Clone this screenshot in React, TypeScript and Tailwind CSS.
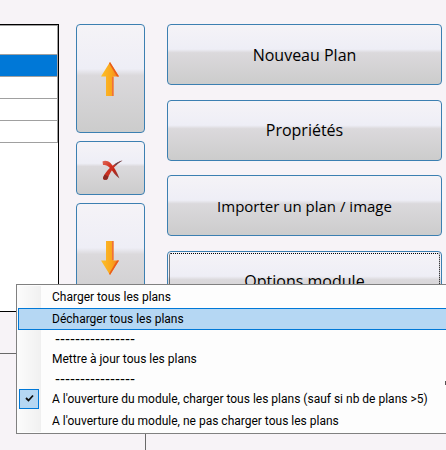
import { useState } from "react";
import clsx from "clsx";

const BUTTON =
  "flex items-center justify-center rounded border border-[#3c7fb1] bg-[linear-gradient(to_bottom,#f5f3f7_0%,#eeeef6_41%,#dbd9dc_47%,#cccccc_100%)] text-black";

const ROWS = ["plan-1", "plan-2", "plan-3", "plan-4"];

const ITEMS = [
  { kind: "action", label: "Charger tous les plans" },
  { kind: "action", label: "Décharger tous les plans", active: true },
  { kind: "divider", label: "----------------" },
  { kind: "action", label: "Mettre à jour tous les plans" },
  { kind: "divider", label: "----------------" },
  {
    kind: "check",
    label: "A l'ouverture du module, charger tous les plans (sauf si nb de plans >5)",
  },
  {
    kind: "action",
    label: "A l'ouverture du module, ne pas charger tous les plans",
  },
];

function Arrow({ down = false }: { down?: boolean }) {
  return (
    <svg
      width="18"
      height="34"
      viewBox="0 0 18 34"
      className={clsx(down && "-scale-y-100")}
      aria-hidden="true"
    >
      <defs>
        <linearGradient id="arrow-fill" x1="0" x2="1" y1="0" y2="0">
          <stop offset="0" stopColor="#fcc02a" />
          <stop offset="0.6" stopColor="#faa51c" />
          <stop offset="1" stopColor="#f27a24" />
        </linearGradient>
      </defs>
      <path d="M9 0 18 14.500H12.500V34H5V14.500H0Z" fill="url(#arrow-fill)" />
      <path d="M9 0 18 14.500H16L8.200 1.500Z" fill="#ea5a1c" />
      <path d="M11 15H12.500V34H11Z" fill="#f0703a" />
    </svg>
  );
}

function Cross() {
  return (
    <svg width="21" height="20" viewBox="0 0 21 20" aria-hidden="true">
      <defs>
        <linearGradient id="cross-fill" x1="0" x2="1" y1="0" y2="1">
          <stop offset="0" stopColor="#dd6a5c" />
          <stop offset="0.5" stopColor="#d3200c" />
          <stop offset="1" stopColor="#7c3d42" />
        </linearGradient>
      </defs>
      <path
        d="M0.500 1.500C2.500 0 6 0.500 8.500 3C12 7 15 12 17.500 18.500C13.500 16 11 11.500 8 8C6 5.500 3 4.500 1 5Z"
        fill="url(#cross-fill)"
      />
      <path
        d="M20.500 0.500C14 4 8.500 11 5.500 19C4 20.500 1 20 1 18C3 12 10 4 20.500 0.500Z"
        fill="#c93022"
      />
      <path d="M20.500 0.500C17.500 1 15 2.500 12.500 4.500L14 5.500C16 3.500 18 2 20.500 0.500Z" fill="#6a4850" />
      <path d="M1 18C1.500 16.500 2 15.500 2.500 14.500L6.500 16.500L5.500 19C4 20.500 1 20 1 18Z" fill="#8a2a24" />
    </svg>
  );
}

function PlanList() {
  const [selected, setSelected] = useState("plan-1");

  return (
    <div className="w-[59px] shrink-0 border border-l-0 border-black bg-white">
      <table
        aria-label="Plans"
        className="w-full border-collapse border-t border-r border-[#a0a0a0]"
      >
        <thead>
          <tr className="h-[29px] border-b border-[#a0a0a0]">
            <td />
          </tr>
        </thead>
        <tbody>
          {ROWS.map((row) => (
            <tr
              key={row}
              onClick={() => setSelected(row)}
              className={clsx(
                "h-[22px] border-b border-[#a0a0a0]",
                row === selected && "bg-[#0078d7]"
              )}
            >
              <td />
            </tr>
          ))}
        </tbody>
      </table>
    </div>
  );
}

function OptionsMenu() {
  const [loadOnOpen, setLoadOnOpen] = useState(true);

  return (
    <div className="absolute top-[284px] right-0 left-4 border border-r-0 border-[#808080] bg-[#fdfdfd] py-px font-[Roboto,sans-serif] text-xs text-black">
      <ul className="bg-[linear-gradient(to_right,#fcfcfc,#f0f0f0_24px,#fdfdfd_24px)] pl-px">
        {ITEMS.map((item, i) => {
          if (item.kind === "divider") {
            return (
              <li
                key={i}
                className="flex h-[18px] items-center pl-[37px] font-['Liberation_Sans',sans-serif] text-[15px]"
              >
                {item.label}
              </li>
            );
          }
          if (item.kind === "check") {
            return (
              <li key={i}>
                <label className="flex h-[22px] items-center whitespace-nowrap">
                  <span className="grid w-[34px] shrink-0 items-center pl-px">
                    <input
                      type="checkbox"
                      checked={loadOnOpen}
                      onChange={(e) => setLoadOnOpen(e.target.checked)}
                      className="col-start-1 row-start-1 size-5 appearance-none checked:border checked:border-[#0078d7] checked:bg-[#b5d7f3]"
                    />
                    {loadOnOpen && (
                      <svg
                        viewBox="0 0 20 20"
                        className="pointer-events-none col-start-1 row-start-1 size-5"
                        aria-hidden="true"
                      >
                        <path
                          d="M7 9 9.500 11.500 14 6.500"
                          fill="none"
                          stroke="#111"
                          strokeWidth="1.800"
                        />
                      </svg>
                    )}
                  </span>
                  {item.label}
                </label>
              </li>
            );
          }
          return (
            <li key={i}>
              <button
                type="button"
                className={clsx(
                  "flex h-[22px] w-full items-center border border-r-0 pl-[33px] text-left whitespace-nowrap",
                  item.active
                    ? "border-[#0078d7] bg-[#b5d7f3]"
                    : "border-transparent"
                )}
              >
                {item.label}
              </button>
            </li>
          );
        })}
      </ul>
      <span className="absolute right-0 bottom-12 h-1 w-px bg-[#555]" />
    </div>
  );
}

export default function App() {
  return (
    <main className="relative flex min-h-screen flex-col overflow-hidden bg-[#f7f3f7] pt-6 font-['Open_Sans','Noto_Sans',sans-serif]">
      <div className="flex pr-1">
        <PlanList />

        <div className="ml-[17px] flex w-[69px] shrink-0 flex-col justify-between">
          <button type="button" aria-label="Monter" className={clsx(BUTTON, "h-[109px] pr-0.5")}>
            <Arrow />
          </button>
          <button type="button" aria-label="Supprimer" className={clsx(BUTTON, "h-[54px] pt-1 pl-1")}>
            <Cross />
          </button>
          <button type="button" aria-label="Descendre" className={clsx(BUTTON, "h-[109px] pr-0.5")}>
            <Arrow down />
          </button>
        </div>

        <div className="ml-[22px] flex h-72 flex-1 flex-col justify-between text-base">
          <button type="button" className={clsx(BUTTON, "h-[61px]")}>
            Nouveau Plan
          </button>
          <button type="button" className={clsx(BUTTON, "h-[61px]")}>
            Propriétés
          </button>
          <button type="button" className={clsx(BUTTON, "h-[61px] text-[15px]")}>
            Importer un plan / image
          </button>
          <button
            type="button"
            className={clsx(BUTTON, "h-[61px] outline-1 -outline-offset-3 outline-black outline-dotted")}
          >
            Options module
          </button>
        </div>
      </div>

      <div className="mt-[41px] w-[146px] flex-1 border-t border-r border-[#696969]" />

      <OptionsMenu />
    </main>
  );
}
